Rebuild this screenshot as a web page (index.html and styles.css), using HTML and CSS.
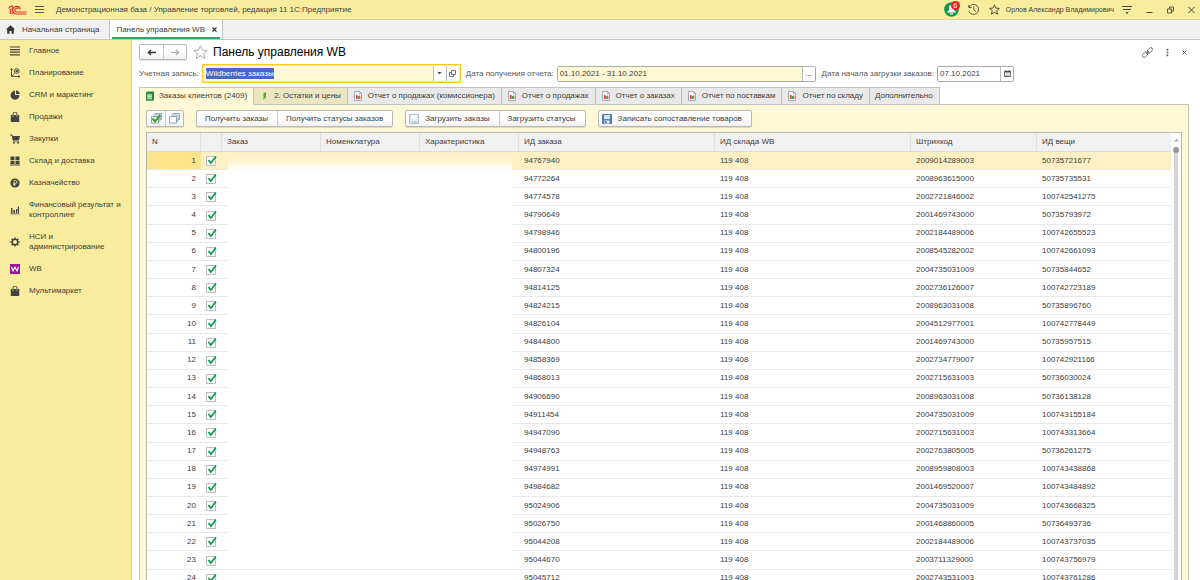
FILE: index.html
```html
<!DOCTYPE html>
<html lang="ru">
<head>
<meta charset="utf-8">
<title>Панель управления WB</title>
<link rel="stylesheet" href="styles.css">
</head>
<body>
<svg class="defs" aria-hidden="true">
  <symbol id="report" viewBox="0 0 10 10"><path d="M1.500.5h5l2 2v7h-7z" fill="#fff" stroke="#8a95a5" stroke-width=".8"/><path d="M6.500.5v2h2" fill="none" stroke="#8a95a5" stroke-width=".7"/><path d="M3 4h1.500v4H3z" fill="#d33"/><path d="M4.700 5h1.200v3H4.700z" fill="#2a9a3a"/><path d="M6.200 4.500h1.200V8H6.200z" fill="#d33"/></symbol>
  <symbol id="bag" viewBox="0 0 10 10"><path d="M.8 3h8.400v7H.8z" fill="#444"/><path d="M3 5V2a2 2 0 0 1 4 0v3" fill="none" stroke="#444"/><path d="M3 3v2M7 3v2" stroke="#f9ed9d" stroke-width=".5"/></symbol>
</svg>
<header class="titlebar">
  <svg class="logo" viewBox="0 0 19 10"><g fill="none" stroke="#d8322b" stroke-width="1.100"><path d="M.6 3.400 2.800 1.100h1.500v8M2.300 3.800v5.300"/><path d="M12.300 4.300A3.800 3.800 0 1 0 9 9H18.500M10.300 4.300A1.900 1.900 0 1 0 9 7h9.500"/></g></svg>
  <button class="icon-btn" aria-label="Меню"><svg width="9" height="8" viewBox="0 0 9 8"><path d="M0 .500h9M0 3.500h9M0 6.500h9" stroke="#555"/></svg></button>
  <span class="app-name">Демонстрационная база / Управление торговлей, редакция 11 1С:Предприятие</span>
  <button class="icon-btn bell" aria-label="Оповещения"><svg width="15" height="15" viewBox="0 0 15 15"><circle cx="7.500" cy="7.500" r="7.300" fill="#0a9a4a"/><path d="M2.500 10.500 5 8V5.500a2.500 2.500 0 0 1 5 0V8l2.500 2.500zM6 11.200h3v1.300H6z" fill="#fff"/></svg><span class="badge">6</span></button>
  <button class="icon-btn" aria-label="История"><svg width="11" height="11" viewBox="0 0 11 11"><path d="M1.200 3A5 5 0 1 1 1 7.500M.8.800v2.700h2.700M5.700 2.500v3.200l2.300 1.800" fill="none" stroke="#444" stroke-width=".9"/></svg></button>
  <button class="icon-btn" aria-label="Избранное"><svg width="11" height="11" viewBox="0 0 11 11"><path d="m5.500.8 1.400 3.300 3.500.3-2.700 2.300.9 3.500-3.100-1.900-3.100 1.900.9-3.500L.6 4.400l3.500-.3z" fill="none" stroke="#444" stroke-width=".9"/></svg></button>
  <span class="user">Орлов Александр Владимирович</span>
  <button class="icon-btn" aria-label="Настройки"><svg width="10" height="10" viewBox="0 0 10 10"><path d="M0 1.500h10M1 4.500h8" stroke="#444"/><path d="M3.300 7h3.400L5 9z" fill="#444"/></svg></button>
  <button class="icon-btn win" aria-label="Свернуть"><svg width="7" height="8" viewBox="0 0 7 8"><path d="M.5 6.500h6" stroke="#444"/></svg></button>
  <button class="icon-btn win" aria-label="Развернуть"><svg width="7" height="8" viewBox="0 0 7 8"><path d="M.5 3h4v4h-4zM2.500 3V1h4v4h-2" fill="none" stroke="#444" stroke-width=".9"/></svg></button>
  <button class="icon-btn win" aria-label="Закрыть"><svg width="7" height="8" viewBox="0 0 7 8"><path d="m.5 1 6 6m0-6-6 6" stroke="#444"/></svg></button>
</header>
<nav class="pages">
  <a class="page" href="#"><svg width="9" height="9" viewBox="0 0 9 9"><path d="M4.500.2 9 4.500H7.800V8.700H5.500V6h-2v2.700H1.200V4.500H0z" fill="#333"/></svg>Начальная страница</a>
  <div class="page current"><a href="#">Панель управления WB</a><button class="close" aria-label="Закрыть вкладку"><svg width="5" height="5" viewBox="0 0 5 5"><path d="m.5.500 4 4m0-4-4 4" stroke="#333" stroke-width="1.100"/></svg></button></div>
</nav>
<div class="workspace">
  <nav class="sections">
    <a href="#"><svg viewBox="0 0 10 10"><path d="M0 1h10M0 3.600h10M0 6.200h10M0 8.800h10" stroke="#444" stroke-width="1.200"/></svg>Главное</a>
    <a href="#"><svg viewBox="0 0 10 10"><g fill="none" stroke="#444" stroke-width=".9"><path d="M1.500 1v7.500H10M.3 2 1.500.6 2.700 2M8.500 7.200l1.300 1.300-1.300 1.300M2 8l2.500-2.500"/><circle cx="6.700" cy="3" r="2.400"/></g><circle cx="6.700" cy="3" r="1.200" fill="#444"/></svg>Планирование</a>
    <a href="#"><svg viewBox="0 0 10 10"><path d="M5 .8V5h4.500A4.500 4.500 0 1 1 5 .8" fill="#444"/><path d="M6 .3A4.500 4.500 0 0 1 9.800 4H6z" fill="#444"/></svg>CRM и маркетинг</a>
    <a href="#"><svg><use href="#bag"/></svg>Продажи</a>
    <a href="#"><svg viewBox="0 0 10 10"><path d="M0 1h2l1.500 6h5.500" fill="none" stroke="#444"/><path d="M2 2h8L9 6H3.200z" fill="#444"/><circle cx="4" cy="8.800" r="1" fill="#444"/><circle cx="8" cy="8.800" r="1" fill="#444"/></svg>Закупки</a>
    <a href="#"><svg viewBox="0 0 10 10"><path d="M.5.500h4v3.500h-4zM5.500.500h4V4h-4zM.5 4.700h4v3.300h-4zM5.500 4.700h4V8h-4zM0 8.600h10v1H0z" fill="#444"/></svg>Склад и доставка</a>
    <a href="#"><svg viewBox="0 0 10 10"><circle cx="5" cy="5" r="4.600" fill="#444"/><path d="M4.200 8V2.500h1.300a1.400 1.400 0 0 1 0 3H3.200M3.200 6.700h2.500" fill="none" stroke="#f9ed9d" stroke-width=".8"/></svg>Казначейство</a>
    <a href="#"><svg viewBox="0 0 10 10"><path d="M1 3h1.500v5H1zM3.500 5H5v3H3.500zM6 4h1.200v4H6zM7.800 1.500H9V8H7.800zM.5 8.500h9v.8h-9z" fill="#444"/></svg>Финансовый результат и контроллинг</a>
    <a href="#"><svg viewBox="0 0 10 10"><circle cx="5" cy="5" r="2.800" fill="none" stroke="#444" stroke-width="1.500"/><g stroke="#444" stroke-width="1.500"><path d="M5 .4v1.600M5 8v1.600M.4 5H2M8 5h1.600M1.700 1.700l1.200 1.200M7.100 7.100l1.200 1.200M8.300 1.700 7.100 2.900M2.900 7.100 1.700 8.300"/></g></svg>НСИ и администрирование</a>
    <a href="#"><svg viewBox="0 0 10 10"><path d="M0 0h10v10H0z" fill="#a0149c"/><path d="m1.500 3 1.500 4L5 3.200 7 7l1.500-4" fill="none" stroke="#fff" stroke-width="1.100"/></svg>WB</a>
    <a href="#"><svg><use href="#bag"/></svg>Мультимаркет</a>
  </nav>
  <main class="form">
    <div class="heading">
      <div class="group history"><button aria-label="Назад"><svg width="10" height="7" viewBox="0 0 10 7"><path d="M9 3.500H1.500M4 1 1.500 3.500 4 6" fill="none" stroke="#333" stroke-width="1.400"/></svg></button><button aria-label="Вперед"><svg width="10" height="7" viewBox="0 0 10 7"><path d="M1 3.500h7.500M6 1l2.500 2.500L6 6" fill="none" stroke="#aaa" stroke-width="1.200"/></svg></button></div>
      <button class="star" aria-label="В избранное"><svg width="15" height="14" viewBox="0 0 15 14"><path d="m7.500.8 1.900 4.300 4.800.4-3.600 3.200 1.100 4.600-4.200-2.500-4.200 2.500 1.100-4.600L.8 5.500l4.800-.4z" fill="#fff" stroke="#999" stroke-width=".8"/></svg></button>
      <h1>Панель управления WB</h1>
      <div class="tools">
        <button aria-label="Ссылка"><svg width="11" height="11" viewBox="0 0 11 11"><g fill="none" stroke="#666" stroke-width=".9"><rect x="5" y="1.500" width="6" height="3.600" rx="1.800" transform="rotate(-45 8 3.300)"/><rect x="0" y="6" width="6" height="3.600" rx="1.800" transform="rotate(-45 3 7.800)"/><path d="m4 7 3-3"/></g></svg></button>
        <button aria-label="Еще"><svg width="3" height="9" viewBox="0 0 3 9"><path d="M.7.800h1.600v1.600H.7zM.7 3.700h1.600v1.600H.7zM.7 6.600h1.600v1.600H.7z" fill="#555"/></svg></button>
        <button aria-label="Закрыть"><svg width="5" height="5" viewBox="0 0 5 5"><path d="m.5.500 4 4m0-4-4 4" stroke="#555" stroke-width=".9"/></svg></button>
      </div>
    </div>
    <div class="fields">
      <label for="account">Учетная запись:</label>
      <div class="field account focused"><div class="value"><input id="account" value="Wildberries заказы"><span class="selected" aria-hidden="true">Wildberries заказы</span></div><button aria-label="Выбрать"><svg width="5" height="3" viewBox="0 0 5 3"><path d="M.5 0h4L2.500 2.500z" fill="#444"/></svg></button><button aria-label="Открыть"><svg width="7" height="7" viewBox="0 0 7 7"><path d="M2.500.500h4v4h-4zM2.500 2.500h-2v4h4v-2" fill="none" stroke="#555" stroke-width=".8"/></svg></button></div>
      <label for="period">Дата получения отчета:</label>
      <div class="field period"><input id="period" value="01.10.2021 - 31.10.2021"><button aria-label="Выбрать период">...</button></div>
      <label for="start">Дата начала загрузки заказов:</label>
      <div class="field start"><input id="start" value="07.10.2021"><button aria-label="Календарь"><svg width="7" height="7" viewBox="0 0 7 7"><path d="M.5 1.500h6v5h-6z" fill="#fff" stroke="#444" stroke-width=".8"/><path d="M.5 1h6v1.500h-6zM1.500 0h1v1h-1zM4.500 0h1v1h-1z" fill="#444"/><path d="M1.500 4h4M1.500 5.500h4" stroke="#888" stroke-width=".6"/></svg></button></div>
    </div>
    <div class="tabs" role="tablist">
      <button class="tab active" role="tab"><svg viewBox="0 0 10 10"><path d="M1 1.500 2.500.500H9v8L8 9.800H1z" fill="#2d8a3c"/><path d="M2 3h5v5.500H2z" fill="#7dc27c"/><path d="M2.500 4h4M2.500 5.500h4M2.500 7h4" stroke="#e8ffe8" stroke-width=".6"/></svg>Заказы клиентов (2409)</button>
      <button class="tab second" role="tab"><svg viewBox="0 0 10 10"><path d="M4 2.500 7 1v5.500L4 9z" fill="#3bb82d"/><path d="M4 2.500 5 2v6L4 9z" fill="#8be04d"/></svg>2. Остатки и цены</button>
      <button class="tab" role="tab"><svg><use href="#report"/></svg>Отчет о продажах (комиссионера)</button>
      <button class="tab" role="tab"><svg><use href="#report"/></svg>Отчет о продажах</button>
      <button class="tab" role="tab"><svg><use href="#report"/></svg>Отчет о заказах</button>
      <button class="tab" role="tab"><svg><use href="#report"/></svg>Отчет по поставкам</button>
      <button class="tab" role="tab"><svg><use href="#report"/></svg>Отчет по складу</button>
      <button class="tab" role="tab">Дополнительно</button>
    </div>
    <section class="panel">
      <div class="commands">
        <div class="group marks"><button aria-label="Отметить все"><svg width="11" height="11" viewBox="0 0 11 11"><path d="M3.500.500h7v6h-2M2 2h7v6H7M.5 3.500h7v6.500h-7z" fill="#fff" stroke="#7790a8" stroke-width=".8"/><path d="m1.500 5.500 2.500 3L9.500 2" fill="none" stroke="#2fa32f" stroke-width="2"/></svg></button><button aria-label="Снять отметки"><svg width="11" height="11" viewBox="0 0 11 11"><path d="M3.500.500h7v6h-2M2 2h7v6H7M.5 3.500h7v6.500h-7z" fill="#fff" stroke="#7790a8" stroke-width=".8"/></svg></button></div>
        <div class="group"><button>Получить заказы</button><button>Получить статусы заказов</button></div>
        <div class="group"><button class="with-icon"><svg width="10" height="10" viewBox="0 0 10 10"><path d="M.5.500h9v9h-9z" fill="#dfe9f0" stroke="#9fb2c2" stroke-width=".8"/><path d="M2 1h6v4H2z" fill="#f8fbfd"/><path d="M3 7h4.500v2H3z" fill="#c4d4df"/></svg>Загрузить заказы</button><button>Загрузить статусы</button></div>
        <div class="group"><button class="with-icon"><svg width="10" height="10" viewBox="0 0 10 10"><path d="M.5.500h9v9h-9z" fill="#5483b4" stroke="#3f6793" stroke-width=".8"/><path d="M2 1h6v4H2z" fill="#d5e5f2"/><path d="M2.500 6.500h5v3h-5z" fill="#eef3f8"/><path d="M3.300 7h1.400v2H3.300z" fill="#3f6793"/></svg>Записать сопоставление товаров</button></div>
      </div>
      <div class="grid">
        <table>
          <colgroup><col class="c-num"><col class="c-check"><col class="c-text"><col class="c-text"><col class="c-text"><col class="c-wide"><col class="c-wide"><col class="c-code"><col></colgroup>
          <thead><tr><th>N</th><th></th><th>Заказ</th><th>Номенклатура</th><th>Характеристика</th><th>ИД заказа</th><th>ИД склада WB</th><th>Штрихкод</th><th>ИД вещи</th></tr></thead>
          <tbody id="rows"></tbody>
        </table>
        <div class="mask"></div>
        <div class="scroll"><svg width="5" height="4" viewBox="0 0 5 4"><path d="M0 3.500 2.500.5 5 3.500z" fill="#aaa"/></svg><div class="track"></div></div>
      </div>
    </section>
  </main>
</div>
<script src="rows.js"></script>
</body>
</html>
```
FILE: styles.css
```css
* { box-sizing: border-box; }
body { margin: 0; height: 100vh; overflow: hidden; display: flex; flex-direction: column; background: #fff; color: #3c3c3c; font: 8px/10px "Liberation Sans", Arial, sans-serif; }
button, input { font: inherit; color: inherit; margin: 0; }
button { display: flex; align-items: center; justify-content: center; padding: 0; border: 0; background: none; white-space: nowrap; }
a { color: inherit; text-decoration: none; }
svg { flex: none; display: block; }
.defs { position: absolute; width: 0; height: 0; }

.titlebar { flex: none; display: flex; align-items: center; height: 19px; padding: 0 5px 0 8px; background: #f9ed9d; gap: 10px; }
.logo { width: 19px; height: 10px; }
.titlebar .icon-btn:first-of-type { margin-left: -2px; }
.app-name { flex: 1; margin-left: 2px; white-space: nowrap; }
.bell { position: relative; margin-right: -1px; }
.badge { position: absolute; top: -1px; right: -1px; width: 9px; height: 9px; border-radius: 50%; background: #e5232b; color: #fff; font-size: 7px; line-height: 9px; }
.user { margin: 0 -2px 0 -4px; font-size: 7px; white-space: nowrap; }
.win { margin-left: 4px; }

.pages { flex: none; display: flex; height: 21px; background: #f0f0f0; border-bottom: 1px solid #c4c4c4; border-top: 1px solid #d8d2a8; }
.page { display: flex; align-items: center; gap: 7px; padding: 0 10px 0 6px; border-right: 1px solid #c4c4c4; white-space: nowrap; }
.page.current { gap: 7px; padding: 0 5px 0 6px; background: linear-gradient(#2fa866, #2fa866) 2px 100% / calc(100% - 4px) 2px no-repeat #fff; }

.workspace { flex: 1; min-height: 0; display: flex; }
.sections { flex: none; width: 132px; background: #f9ed9d; border-right: 1px solid #ddd08a; }
.sections a { display: flex; align-items: center; gap: 9px; padding: 6px 8px 6px 10px; }
.sections svg { width: 10px; height: 10px; }

.form { flex: 1; min-width: 0; display: flex; flex-direction: column; padding: 4px 11px 0 7px; }
.heading { flex: none; display: flex; align-items: center; height: 16px; gap: 5px; }
.heading h1 { flex: 1; margin: 0; font-size: 12px; line-height: 16px; font-weight: normal; color: #000; }
.star { padding-left: 1px; }
.tools { display: flex; align-items: center; gap: 13px; padding-right: 2px; }
.group { display: flex; height: 16px; border: 1px solid #b8b8b8; border-radius: 2px; background: linear-gradient(#fff 50%, #f0f0f0); box-shadow: 0 1px 1px #0002; }
.group button { padding: 0 9px 0 8px; gap: 6px; }
.group .with-icon { padding-left: 3px; }
.group button + button { border-left: 1px solid #c8c8c8; }
.group.history button { width: 23px; padding: 0; }

.fields { flex: none; display: flex; align-items: center; height: 19px; margin-top: 4px; gap: 3px; }
.fields label { white-space: nowrap; color: #555; }
.field { display: flex; height: 16px; border: 1px solid #aaa; border-radius: 2px; overflow: hidden; }
.field input { flex: 1; width: 0; min-width: 0; border: 0; outline: 0; padding: 0 2px; background: #fff8d6; }
.field button { width: 13px; border-left: 1px solid #bbb; background: #fff; }
.account { width: 259px; margin-right: 2px; }
.focused { height: 19px; border: 1px solid #fac81e; box-shadow: inset 0 0 0 1px #fac81e66; border-radius: 0; padding: 1px; }
.value { flex: 1; position: relative; display: flex; }
.selected { position: absolute; left: 2px; top: 2px; line-height: 11px; background: #4a66c4; color: #fff; pointer-events: none; }
.period { flex: 1; margin-right: 3px; }
.start { width: 77px; margin-right: 175px; }
.start input { background: #fff; }

.tabs { flex: none; display: flex; height: 18px; margin: 4px 0 -1px; position: relative; }
.tab { padding: 0 6px 0 5px; gap: 5px; border: 1px solid #c2c2c2; border-left-width: 0; background: #e9e9e9; }
.tab svg { width: 10px; height: 10px; }
.tab.active { gap: 4px; border-left-width: 1px; border-bottom-color: #fff8d6; background: #fff8d6; }
.tab.second { background: #ece5c2; }

.panel { flex: 1; min-height: 0; display: flex; flex-direction: column; padding: 5px 6px 0; border: 1px solid #c2c2b8; border-bottom: 0; background: #fff8d6; }
.commands { flex: none; display: flex; gap: 12px; height: 22px; }
.commands .group { height: 17px; }
.marks button { width: 18px; padding: 0; }
.grid { flex: 1; min-height: 0; position: relative; display: flex; align-items: flex-start; border: 1px solid #b8b8a8; border-bottom: 0; background: #fff; overflow: hidden; }
table { flex: 1; min-width: 0; height: 455px; table-layout: fixed; border-collapse: separate; border-spacing: 0; }
.c-num { width: 54px; }
.c-check { width: 21px; }
.c-text { width: 99px; }
.c-wide { width: 196px; }
.c-code { width: 126px; }
th { height: 19px; padding: 0 5px; font-weight: normal; text-align: left; background: #f1f1f1; border-right: 1px solid #e0e0e0; border-bottom: 1px solid #ddd; white-space: nowrap; }
th:last-child { border-right: 0; }
td { padding: 0 5px; border-bottom: 1px solid #e8e8e8; }
td:first-child { text-align: right; }
tbody tr:first-child td { background: #fdf0c4; }
tbody tr:first-child td:first-child { background: #fce38c; }
td input { display: block; appearance: none; width: 11px; height: 11px; margin: 0; background: url("data:image/svg+xml,%3Csvg xmlns='http://www.w3.org/2000/svg' viewBox='0 0 11 11'%3E%3Cpath d='M.5 1.500h9v9h-9z' fill='%23fff' stroke='%23bbb'/%3E%3Cpath d='M2.500 5l2.300 3L10 1.500' fill='none' stroke='%230b9a48' stroke-width='1.700'/%3E%3C/svg%3E"); }
.mask { position: absolute; left: 81px; top: 24px; width: 284px; height: 408px; background: linear-gradient(#fff0, #fff 14px); }
.scroll { flex: none; align-self: stretch; width: 10px; display: flex; flex-direction: column; align-items: center; gap: 8px; padding-top: 5px; background: #fff; }
.track { position: relative; flex: 1; width: 4px; background: #d4d4d4; }
.track::before { content: ""; position: absolute; left: -1px; top: -3px; width: 6px; height: 6px; border-radius: 50%; background: #999; }
```
FILE: rows.js
```js
const orders = [
  ["94767940", "2009014289003", "50735721677"],
  ["94772264", "2008963615000", "50735735531"],
  ["94774578", "2002721846002", "100742541275"],
  ["94790649", "2001469743000", "50735793972"],
  ["94798946", "2002184489006", "100742655523"],
  ["94800196", "2008545282002", "100742661093"],
  ["94807324", "2004735031009", "50735844652"],
  ["94814125", "2002736126007", "100742723189"],
  ["94824215", "2008963031008", "50735896760"],
  ["94826104", "2004512977001", "100742778449"],
  ["94844800", "2001469743000", "50735957515"],
  ["94858369", "2002734779007", "100742921166"],
  ["94868013", "2002715631003", "50736030024"],
  ["94906690", "2008963031008", "50736138128"],
  ["94911454", "2004735031009", "100743155184"],
  ["94947090", "2002715631003", "100743313664"],
  ["94948763", "2002763805005", "50736261275"],
  ["94974991", "2008959808003", "100743438868"],
  ["94984682", "2001469520007", "100743484892"],
  ["95024906", "2004735031009", "100743668325"],
  ["95026750", "2001468860005", "50736493736"],
  ["95044208", "2002184489006", "100743737035"],
  ["95044670", "2003711329000", "100743756979"],
  ["95045712", "2002743531003", "100743761286"]
];
document.getElementById("rows").innerHTML = orders.map(([id, barcode, item], i) =>
  `<tr><td>${i + 1}</td><td><input type="checkbox" checked aria-label="Строка ${i + 1}"></td><td></td><td></td><td></td><td>${id}</td><td>119 408</td><td>${barcode}</td><td>${item}</td></tr>`
).join("");
```
